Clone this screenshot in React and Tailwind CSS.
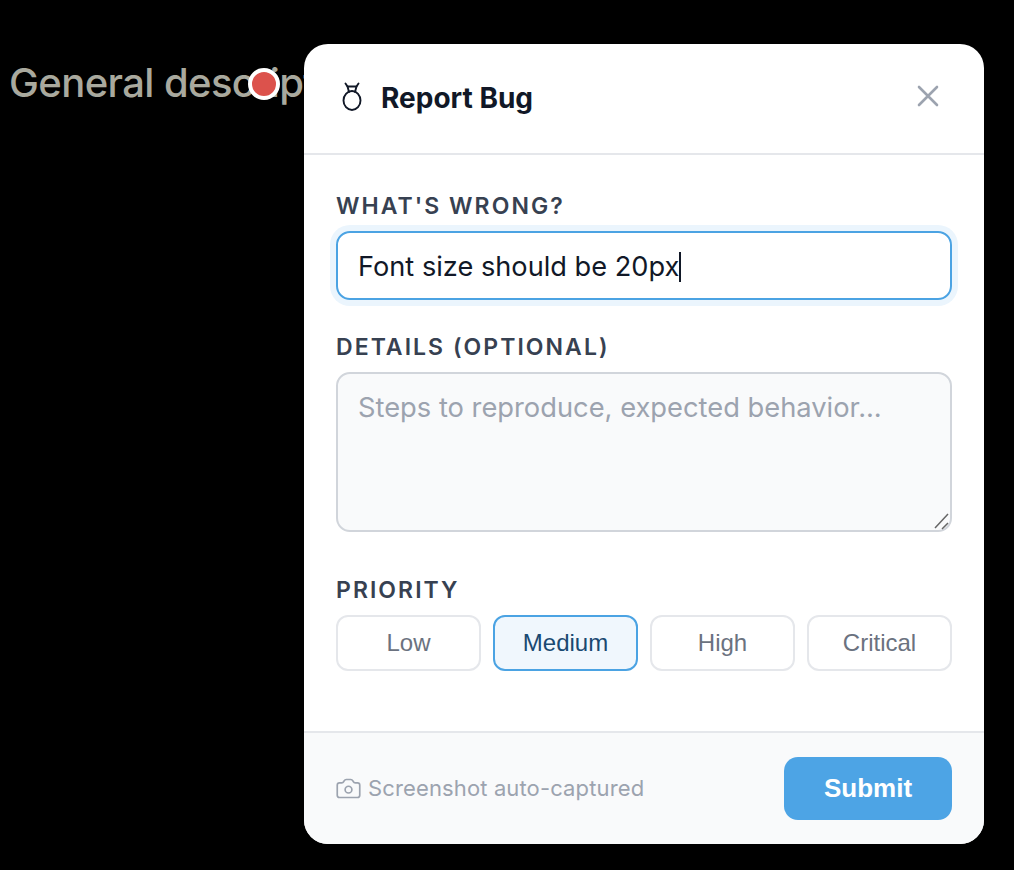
import React from 'react';
import { Camera } from 'lucide-react';

const PRIORITIES = ['Low', 'Medium', 'High', 'Critical'];

function BugIcon() {
  return (
    <svg width="24" height="30" viewBox="0 0 24 30" fill="none" stroke="#111827" strokeWidth="1.9" strokeLinecap="round" strokeLinejoin="round" className="-mt-1">
      <path d="M7.5 4.5 L5.5 1.5 M16.5 4.5 L18.5 1.5" />
      <path d="M9 10 L7.5 4.5 H16.5 L15 10" />
      <ellipse cx="12" cy="18.5" rx="8.5" ry="9.5" />
    </svg>
  );
}

function Label({ children }) {
  return <div className="text-[23px] leading-[28px] font-semibold tracking-[2.05px] text-[#374151]">{children}</div>;
}

function App() {
  return (
    <div className="flex h-[870px] w-[1014px] bg-black font-['Inter',sans-serif]">
      {/* Page behind the dialog */}
      <div className="relative h-[870px] w-[304px] overflow-hidden">
        <div className="whitespace-nowrap pl-[9px] pt-[59px] text-[40px] leading-[48px] font-medium tracking-[-0.6px] text-[#a9a99e]">General description</div>
        <div className="absolute left-[248px] top-[68px] h-8 w-8 rounded-full border-4 border-white bg-[#dc524c]"></div>
      </div>

      {/* Dialog */}
      <div className="mt-11 flex h-[800px] w-[680px] flex-col overflow-hidden rounded-[24px] bg-white">
        <div className="flex h-[111px] items-center justify-between border-b-2 border-[#e5e7eb] pl-[36px] pr-[45px]">
          <div className="flex items-center gap-[17px]">
            <BugIcon />
            <div className="-mt-[2px] text-[28px] font-bold text-[#111827]">Report Bug</div>
          </div>
          <svg width="22" height="22" viewBox="0 0 22 22" fill="none" stroke="#9ca3af" strokeWidth="2.6" strokeLinecap="round" className="-mt-[5px]">
            <path d="M2 2 L20 20 M20 2 L2 20" />
          </svg>
        </div>

        <div className="flex flex-1 flex-col px-8 pt-[37px]">
          <Label>WHAT'S WRONG?</Label>
          <div className="mt-[11px] flex h-[69px] items-center rounded-[14px] border-2 border-[#4ba3e3] px-5 pt-[3px] text-[27.2px] text-[#111827] shadow-[0_0_0_6px_#ebf5fd]">
            <span>Font size should be 20px</span>
            <span className="h-[30px] w-[2px] bg-[#111827]"></span>
          </div>

          <div className="mt-[33px]">
            <Label>DETAILS (OPTIONAL)</Label>
          </div>
          <div className="relative mt-[11px]">
            <textarea
              placeholder="Steps to reproduce, expected behavior..."
              className="block h-[160px] w-full resize-none rounded-[14px] border-2 border-[#d1d5db] bg-[#f9fafb] px-5 py-[17px] text-[27.3px] leading-[34px] text-[#111827] outline-none placeholder:text-[#9ca3af]"
            />
            {/* resize grip */}
            <svg width="16" height="18" viewBox="0 0 16 18" fill="none" stroke="#666666" strokeWidth="1.5" className="absolute bottom-[2px] right-[3px]">
              <path d="M2 16 L15 2 M9 17 L15 11" />
            </svg>
          </div>

          <div className="mt-[44px]">
            <Label>PRIORITY</Label>
          </div>
          <div className="mt-[11px] grid grid-cols-4 gap-3">
            {PRIORITIES.map((p) => (
              <div
                key={p}
                className={
                  p === 'Medium'
                    ? "flex h-14 items-center justify-center rounded-[12px] border-2 border-[#4ba3e3] bg-[#f0f7fd] font-['Liberation_Sans',sans-serif] text-[24px] text-[#1a4971]"
                    : "flex h-14 items-center justify-center rounded-[12px] border-2 border-[#e5e7eb] bg-white font-['Liberation_Sans',sans-serif] text-[24px] text-[#6b7280]"
                }
              >
                {p}
              </div>
            ))}
          </div>
        </div>

        <div className="flex h-[113px] items-center justify-between border-t-2 border-[#e5e7eb] bg-[#f9fafb] px-8">
          <div className="flex items-center gap-[6px] text-[22px] tracking-[0.13px] text-[#9ca3af]">
            <Camera size={27} strokeWidth={1.5} className="-ml-[1px]" />
            <span>Screenshot auto-captured</span>
          </div>
          <div className="flex h-[63px] w-[168px] items-center justify-center rounded-[14px] bg-[#4da4e5] font-['Liberation_Sans',sans-serif] text-[26px] font-bold text-white">
            Submit
          </div>
        </div>
      </div>
    </div>
  );
}

export default App;
